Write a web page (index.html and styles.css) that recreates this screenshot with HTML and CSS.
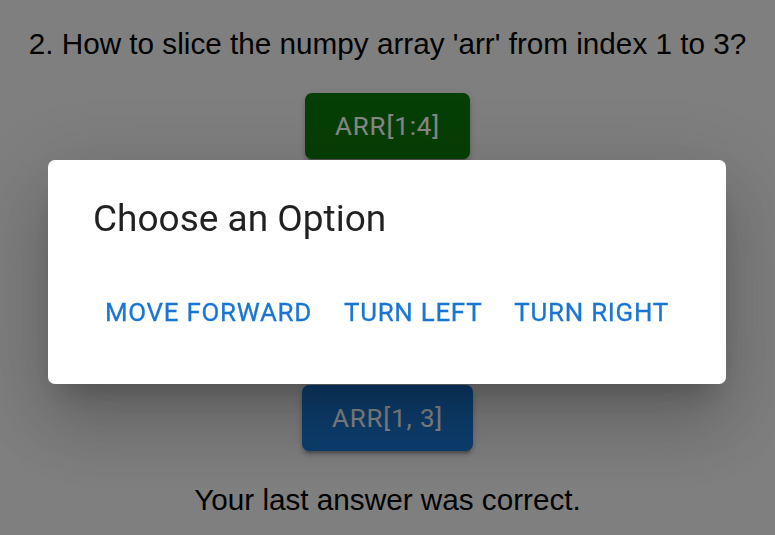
FILE: index.html
```html
<!DOCTYPE html>
<html lang="en">
<head>
<meta charset="utf-8">
<title>Quiz</title>
<link rel="stylesheet" href="styles.css">
</head>
<body>
<main class="quiz">
  <p class="question">2. How to slice the numpy array 'arr' from index 1 to 3?</p>
  <div class="answers">
    <button class="answer answer-correct">arr[1:4]</button>
    <button class="answer">arr[1:3]</button>
    <button class="answer">arr[0:3]</button>
    <button class="answer">arr[2:4]</button>
    <button class="answer">arr[1, 3]</button>
  </div>
  <p class="status">Your last answer was correct.</p>
</main>
<div class="backdrop">
  <div class="dialog" role="dialog">
    <h2 class="dialog-title">Choose an Option</h2>
    <div class="dialog-actions">
      <button class="text-btn">Move Forward</button>
      <button class="text-btn">Turn Left</button>
      <button class="text-btn">Turn Right</button>
    </div>
  </div>
</div>
</body>
</html>
```

FILE: styles.css
```css
html, body {
  margin: 0;
  padding: 0;
  background: #f0f0f0;
  height: 100%;
  overflow: hidden;
}

.quiz {
  font-family: "Liberation Sans", Arial, sans-serif;
  font-size: 29.7px;
  color: #000;
  text-align: center;
  padding-top: 27px;
}

.question {
  margin: 0;
  line-height: normal;
}

.answers {
  margin-top: 32px;
  display: flex;
  flex-direction: column;
  align-items: center;
  gap: 7px;
}

.answer {
  font-family: Roboto, "Noto Sans", sans-serif;
  font-weight: 400;
  font-size: 25.9px;
  letter-spacing: 0.9px;
  text-transform: uppercase;
  color: #fff;
  background: #1976d2;
  border: none;
  border-radius: 7px;
  height: 66px;
  padding: 0 30px;
  box-shadow: 0 5px 2px -3px rgba(0,0,0,0.2), 0 4px 4px 0 rgba(0,0,0,0.14), 0 2px 9px 0 rgba(0,0,0,0.12);
}

.answer-correct {
  background: #0b770b;
}

.status {
  margin: 32px 0 0;
  line-height: normal;
}

.backdrop {
  position: fixed;
  inset: 0;
  background: rgba(0, 0, 0, 0.47);
  display: flex;
  align-items: flex-start;
  justify-content: center;
  padding: 160px 49px 0 48px;
}

.dialog {
  flex: 1;
  background: #fff;
  border-radius: 7px;
  padding: 37px 0 38px;
  box-shadow: 0 20px 28px -12px rgba(0,0,0,0.2), 0 44px 70px 6px rgba(0,0,0,0.14), 0 17px 85px 15px rgba(0,0,0,0.12);
  font-family: Roboto, "Noto Sans", sans-serif;
}

.dialog-title {
  margin: 0 45px;
  font-weight: 400;
  font-size: 37px;
  line-height: 44px;
  color: rgba(0, 0, 0, 0.87);
}

.dialog-actions {
  margin-top: 38px;
  display: flex;
  justify-content: center;
}

.text-btn {
  font-family: Roboto, "Noto Sans", sans-serif;
  font-weight: 400;
  font-size: 25.9px;
  letter-spacing: 0.74px;
  line-height: 45px;
  text-transform: uppercase;
  color: #1976d2;
  -webkit-text-stroke: 0.3px #1976d2;
  background: transparent;
  border: none;
  padding: 11px 16px;
}
```
